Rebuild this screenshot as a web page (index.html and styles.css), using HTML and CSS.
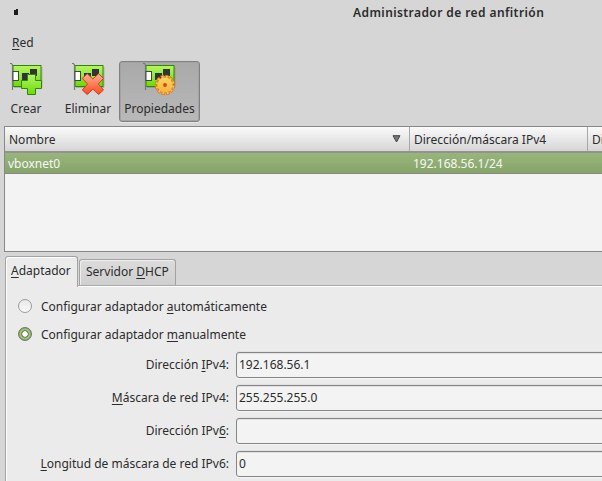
FILE: index.html
```
<!DOCTYPE html>
<html lang="es">
<head>
<meta charset="utf-8">
<title>Administrador de red anfitrión</title>
<link rel="stylesheet" href="styles.css">
</head>
<body>
<svg class="defs" width="0" height="0" aria-hidden="true">
  <defs>
    <linearGradient id="board" x1="0" y1="0" x2="0" y2="1"><stop offset="0" stop-color="#b4f565"/><stop offset="1" stop-color="#6adb07"/></linearGradient>
    <linearGradient id="red" x1="0" y1="0" x2="0" y2="1"><stop offset="0" stop-color="#ffb096"/><stop offset="1" stop-color="#ff4a22"/></linearGradient>
    <linearGradient id="gold" x1="0" y1="0" x2="0" y2="1"><stop offset="0" stop-color="#ffd468"/><stop offset="1" stop-color="#ffb03a"/></linearGradient>
    <g id="card">
      <path d="M4 25.3h27.9V5" fill="none" stroke="#777" stroke-opacity=".5"/>
      <rect x="3" y="3.5" width="28" height="21" fill="url(#board)" stroke="#348406"/>
      <path d="M0 1.5h1.5l1 1.5v25" fill="none" stroke="#777" stroke-width="1.2"/>
      <rect x="3" y="9.5" width="5.5" height="9" fill="#fff" stroke="#444"/>
      <path d="M12 11h7v7h-7zM20 7h7v7h-7z" fill="#333"/>
    </g>
  </defs>
</svg>
<div class="window">
  <header class="titlebar">
    <svg class="app-icon" width="6" height="8" viewBox="0 0 6 8"><path d="M1 1h2V0h2v6H1z" fill="#1c1c1c"/></svg>
    <h1>Administrador de red anfitrión</h1>
  </header>
  <nav class="menubar"><span><u>R</u>ed</span></nav>
  <div class="toolbar">
    <div class="tool create">
      <svg width="34" height="34" viewBox="-1 0 34 34"><use href="#card"/><path d="M17.5 12.5h8v6h6v8h-6v6h-8v-6h-6v-8h6z" fill="url(#board)" stroke="#348406" stroke-linejoin="round"/></svg>
      <span>Crear</span>
    </div>
    <div class="tool remove">
      <svg width="34" height="34" viewBox="-1 0 34 34"><use href="#card"/><path d="M15.2 11.7l5.7 5.3 5.7-5.3 4.9 4.7-5.2 5.7 5.2 5.9-4.9 4.5-5.7-5.3-5.7 5.3-4.9-4.5 5.2-5.9-5.2-5.7z" fill="url(#red)" stroke="#d03c20" stroke-linejoin="round"/></svg>
      <span>Eliminar</span>
    </div>
    <div class="tool props">
      <svg width="34" height="34" viewBox="-1 0 34 34"><use href="#card"/><g fill="none"><circle cx="22" cy="23" r="8.3" fill="#df741a"/><circle cx="22" cy="23" r="8.3" stroke="#df741a" stroke-width="3.8" stroke-dasharray="3.2 1.146"/><circle cx="22" cy="23" r="8.3" stroke="#ffc04c" stroke-width="2.2" stroke-dasharray="1.8 2.546" stroke-dashoffset="-.7"/></g><circle cx="22" cy="23" r="7.6" fill="url(#gold)"/><circle cx="22" cy="23" r="1.9" fill="#c05008"/></svg>
      <span>Propiedades</span>
    </div>
  </div>
  <div class="table">
    <div class="row head">
      <div class="cell name">Nombre<svg class="sort" width="9" height="8" viewBox="0 0 9 8"><path d="M1 .7h7L4.5 7z" fill="#777" stroke="#444"/></svg></div>
      <div class="cell mask">Dirección/máscara IPv4</div>
      <div class="cell last">Di</div>
    </div>
    <div class="row selected">
      <div class="cell name">vboxnet0</div>
      <div class="cell mask">192.168.56.1/24</div>
    </div>
  </div>
  <div class="tabs">
    <div class="tab active"><span><u>A</u>daptador</span></div>
    <div class="tab"><span>Servidor <u>D</u>HCP</span></div>
  </div>
  <main class="panel">
    <div class="option"><i class="radio"></i><span>Configurar adaptador <u>a</u>utomáticamente</span></div>
    <div class="option"><i class="radio on"></i><span>Configurar adaptador <u>m</u>anualmente</span></div>
    <div class="fields">
      <label>Dirección <u>I</u>Pv4:</label><div class="input">192.168.56.1</div>
      <label><u>M</u>áscara de red IPv4:</label><div class="input">255.255.255.0</div>
      <label>Dirección IPv<u>6</u>:</label><div class="input"></div>
      <label><u>L</u>ongitud de máscara de red IPv6:</label><div class="input">0</div>
    </div>
  </main>
</div>
</body>
</html>
```
FILE: styles.css
```
* { box-sizing: border-box; }
body {
  margin: 0;
  background: #d6d6d6;
  color: #2c2c2c;
  font: 12px/16px "Noto Sans", sans-serif;
  white-space: nowrap;
}
u {
  text-decoration: underline 1px;
  text-underline-offset: 2px;
  text-decoration-skip-ink: none;
}
svg { display: block; flex: none; }
.defs { position: absolute; }
.window {
  width: 602px;
  height: 481px;
  overflow: hidden;
  display: flex;
  flex-direction: column;
}
.titlebar {
  height: 30px;
  flex: none;
  display: flex;
  padding: 5px 0 0 13px;
}
.app-icon { margin-top: 4px; }
h1 {
  margin: 0 0 0 334px;
  font-size: 12px;
  line-height: 16px;
  font-weight: 600;
  letter-spacing: .41px;
}
.menubar { height: 31px; flex: none; padding: 5px 12px; }
.toolbar {
  height: 65px;
  flex: none;
  display: flex;
  align-items: flex-start;
  padding-left: 4px;
}
.tool {
  height: 61px;
  display: flex;
  flex-direction: column;
  align-items: center;
  padding-top: 1px;
}
.tool span { margin-top: 5px; }
.create { width: 44px; }
.remove { width: 80px; }
.props {
  width: 81px;
  margin-left: -9px;
  padding-top: 0;
  border: 1px solid #808080;
  border-radius: 3px;
  background: linear-gradient(#a9a9a9, #b9b9b9);
  box-shadow: inset 0 0 0 1px #a3a3a3, 0 1px #e5e5e5;
}
.props svg { margin-right: 1px; }
.table {
  height: 126px;
  flex: none;
  margin-left: 4px;
  border: 1px solid #888;
  border-right: 0;
  background: #f3f3f3;
}
.row { display: flex; width: 598px; }
.head {
  height: 26px;
  background: linear-gradient(#fafafa, #d6d6d6);
  border-bottom: 2px solid #929292;
}
.cell { flex: none; padding: 5px 0 0 4px; }
.head .cell { border-right: 1px solid #a8a8a8; }
.head .last { border-right: 0; }
.name { width: 405px; display: flex; justify-content: space-between; }
.mask { width: 178px; }
.sort { margin: 3px 8px 0 0; }
.selected {
  height: 21px;
  color: #f7f7f7;
  background: linear-gradient(#99b57c, #86a569);
  border-bottom: 1px solid #888;
}
.selected .cell { padding: 3px 0 0 3px; }
.tabs {
  height: 33px;
  flex: none;
  display: flex;
  align-items: flex-end;
  padding-left: 5px;
  gap: 1px;
}
.tab {
  width: 97px;
  height: 26px;
  padding: 4px 0 0 6px;
  border: 1px solid #a2a2a2;
  border-bottom: 0;
  border-radius: 3px 3px 0 0;
  box-shadow: inset 1px 1px #eee;
  background: linear-gradient(#dcdcdc, #cfcfcf);
}
.tab.active {
  position: relative;
  width: 73px;
  height: 31px;
  padding: 6px 0 0 5px;
  margin-bottom: -2px;
  background: #ebebeb;
  box-shadow: inset 1px 1px #fff;
}
.panel {
  flex: 1;
  margin-left: 5px;
  padding: 13px 0 0 12px;
  background: #ebebeb;
  border-top: 1px solid #aaa;
  border-left: 1px solid #a2a2a2;
  box-shadow: inset 1px 1px #fff;
}
.option { display: flex; height: 28px; gap: 9px; }
.radio {
  width: 14px;
  height: 14px;
  border: 1px solid #9b9b9b;
  border-radius: 50%;
  background: linear-gradient(#e8e8e8, #fafafa);
}
.radio.on {
  border-color: #6e7766;
  background: radial-gradient(circle, #fff 0 2.4px, #718f55 3px 3.5px, #a0c17e 4.2px 5px, #829e68 6px);
}
.fields {
  display: grid;
  grid-template-columns: 211px 400px;
  column-gap: 7px;
  row-gap: 7px;
  margin-top: -3px;
}
label { text-align: right; padding-top: 5px; }
.input {
  height: 26px;
  padding: 4px 2px;
  border: 1px solid #858585;
  border-radius: 3px;
  background: #f3f3f3;
  box-shadow: inset 0 1px #e0e0e0, 0 -1px #e2e2e2, 0 1px #f5f5f5;
}
```
